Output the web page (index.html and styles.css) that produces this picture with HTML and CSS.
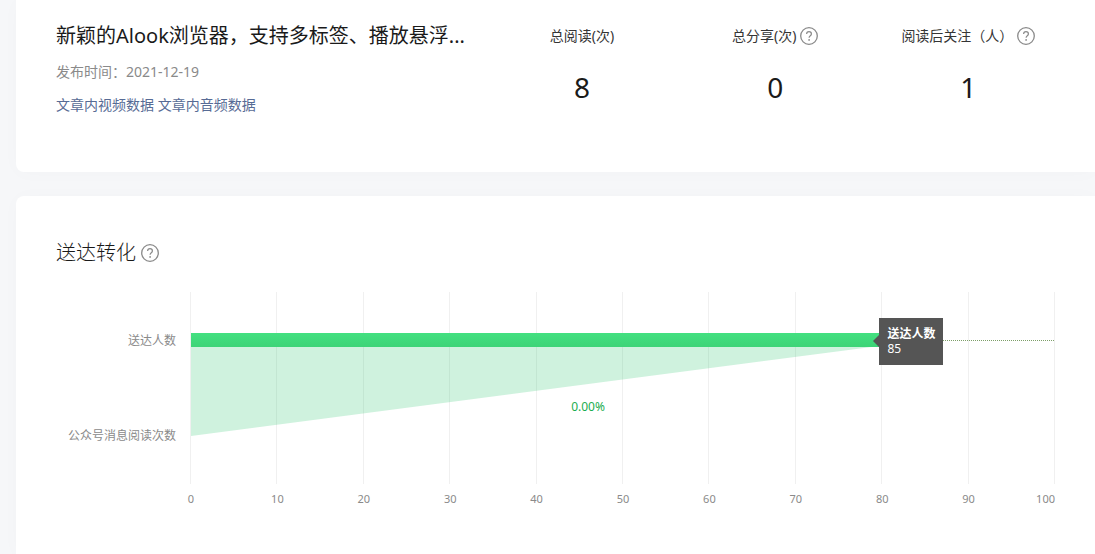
FILE: index.html
```
<!DOCTYPE html>
<html lang="zh-CN">

<head>
    <meta charset="UTF-8">
    <meta name="viewport" content="width=device-width, initial-scale=1.0">
    <title>图文分析</title>
    <link rel="stylesheet" href="styles.css">
</head>

<body>

    <!-- help icon, used next to labels -->
    <svg class="symbols" aria-hidden="true">
        <symbol id="icon-help" viewBox="0 0 18 18">
            <circle cx="9" cy="9" r="8.3" fill="none" stroke="currentColor" stroke-width="1.3"/>
            <path d="M6.6 7.1C6.6 5.6 7.6 4.7 9 4.7s2.4.9 2.4 2.2c0 1.8-2.3 1.8-2.3 3.9" fill="none" stroke="currentColor" stroke-width="1.2"/>
            <circle cx="9.1" cy="12.9" r=".9" fill="currentColor"/>
        </symbol>
    </svg>

    <section class="card summary">
        <div class="article">
            <h1 class="title">新颖的Alook浏览器，支持多标签、播放悬浮...</h1>
            <p class="date">发布时间：2021-12-19</p>
            <p class="links"><a href="#video">文章内视频数据</a> <a href="#audio">文章内音频数据</a></p>
        </div>
        <div class="stat">
            <div class="stat-label">总阅读(次)</div>
            <div class="stat-value">8</div>
        </div>
        <div class="stat">
            <div class="stat-label">总分享(次)
                <button class="help" type="button" aria-label="总分享说明"><svg><use href="#icon-help"/></svg></button>
            </div>
            <div class="stat-value">0</div>
        </div>
        <div class="stat">
            <div class="stat-label">阅读后关注（人）
                <button class="help" type="button" aria-label="阅读后关注说明"><svg><use href="#icon-help"/></svg></button>
            </div>
            <div class="stat-value">1</div>
        </div>
    </section>

    <section class="card conversion">
        <h2 class="title">送达转化
            <button class="help" type="button" aria-label="送达转化说明"><svg><use href="#icon-help"/></svg></button>
        </h2>

        <div class="chart">
            <div class="categories">
                <span>送达人数</span>
                <span>公众号消息阅读次数</span>
            </div>
            <div class="plot">
                <svg class="drawing" aria-hidden="true">
                    <defs>
                        <linearGradient id="bar-fill" x1="0" y1="0" x2="0" y2="1">
                            <stop offset="0" stop-color="#43e080"/>
                            <stop offset="1" stop-color="#3dd477"/>
                        </linearGradient>
                    </defs>
                    <g class="grid-lines" transform="translate(-1 0)">
                        <rect x="0%" width="1" height="192"/>
                        <rect x="10%" width="1" height="192"/>
                        <rect x="20%" width="1" height="192"/>
                        <rect x="30%" width="1" height="192"/>
                        <rect x="40%" width="1" height="192"/>
                        <rect x="50%" width="1" height="192"/>
                        <rect x="60%" width="1" height="192"/>
                        <rect x="70%" width="1" height="192"/>
                        <rect x="80%" width="1" height="192"/>
                        <rect x="90%" width="1" height="192"/>
                        <rect x="100%" width="1" height="192"/>
                    </g>
                    <svg width="100%" height="192" viewBox="0 0 100 192" preserveAspectRatio="none">
                        <polygon class="funnel" points="0,48 85,48 0,144"/>
                    </svg>
                    <line class="pointer" x1="0" y1="48.5" x2="100%" y2="48.5"/>
                    <rect x="0" y="41" width="85%" height="14" fill="url(#bar-fill)"/>
                </svg>
                <span class="rate">0.00%</span>
                <div class="tooltip" role="tooltip">
                    <strong>送达人数</strong>
                    <span>85</span>
                </div>
            </div>
            <ol class="ticks">
                <li>0</li>
                <li>10</li>
                <li>20</li>
                <li>30</li>
                <li>40</li>
                <li>50</li>
                <li>60</li>
                <li>70</li>
                <li>80</li>
                <li>90</li>
                <li>100</li>
            </ol>
        </div>
    </section>

</body>

</html>
```
FILE: styles.css
```
* {
    box-sizing: border-box;
}

body {
    margin: 0;
    padding-left: 16px;
    background-color: #f6f7f9;
    color: #1a1a1a;
    font-family: "Noto Sans", "Noto Sans CJK SC", sans-serif;
    font-size: 14px;
    line-height: 20px;
}

h1,
h2,
p,
ol {
    margin: 0;
    padding: 0;
}

.symbols {
    display: none;
}

.card {
    background-color: #fff;
    box-shadow: 0 1px 20px rgba(0, 0, 0, 0.02);
}

.title {
    font-size: 20px;
    font-weight: 400;
    line-height: 32px;
    white-space: nowrap;
}

.help {
    width: 18px;
    height: 18px;
    padding: 0;
    border: none;
    background: none;
    color: #8a8a8a;
    cursor: pointer;
}

.help svg {
    display: block;
    width: 18px;
    height: 18px;
}

/* article summary */
.summary {
    display: grid;
    grid-template-columns: 20fr 9fr 9fr 9fr;
    padding: 20px 30px 57px 40px;
    border-radius: 0 0 0 8px;
}

.article {
    min-width: 0;
}

.date {
    margin-top: 10px;
    color: #8a8a8a;
}

.links {
    margin-top: 13px;
}

.links a {
    color: #576b95;
    text-decoration: none;
}

.stat-label {
    display: flex;
    justify-content: center;
    align-items: center;
    gap: 4px;
    height: 32px;
    color: #353535;
    white-space: nowrap;
}

.stat-value {
    margin-top: 15px;
    font-size: 28px;
    line-height: 40px;
    text-align: center;
}

/* delivery conversion */
.conversion {
    margin-top: 24px;
    padding: 41px 40px 45px;
    border-radius: 8px 0 0 0;
}

.conversion .title {
    display: flex;
    align-items: center;
    gap: 5px;
    font-weight: 300;
}

.chart {
    display: grid;
    grid-template-columns: 120px 1fr;
    column-gap: 15px;
    margin-top: 23px;
    color: #8a8a8a;
    font-size: 12px;
}

.categories {
    display: grid;
    grid-template-rows: 1fr 1fr;
    align-items: center;
    padding-top: 1px;
    text-align: right;
}

.plot {
    position: relative;
    height: 192px;
}

.drawing {
    display: block;
    width: 100%;
    height: 192px;
    overflow: visible;
}

.grid-lines {
    fill: #f0f0f0;
    shape-rendering: crispEdges;
}

.funnel {
    fill: #0fbd58;
    fill-opacity: 0.2;
}

.pointer {
    stroke: #7d9e68;
    stroke-width: 1;
    stroke-dasharray: 1 1;
}

.rate {
    position: absolute;
    top: 105px;
    left: 44%;
    color: #1aad50;
}

.tooltip {
    position: absolute;
    top: 26px;
    left: calc(85% - 46px);
    display: flex;
    flex-direction: column;
    padding: 8px 8px 9px;
    background-color: #555;
    color: #fff;
    line-height: 15px;
    white-space: nowrap;
}

.tooltip::before {
    content: "";
    position: absolute;
    top: 17px;
    left: -6px;
    border: 6px solid transparent;
    border-left: none;
    border-right-color: #555;
}

/* each label is centred under its grid line, the last one ends at it */
.ticks {
    grid-column: 2;
    display: grid;
    grid-template-columns: repeat(10, 2fr) 1fr;
    margin-top: 5px;
    margin-left: -5%;
    list-style: none;
    font-size: 11px;
    text-align: center;
}

.ticks li:last-child {
    text-align: right;
}
```
